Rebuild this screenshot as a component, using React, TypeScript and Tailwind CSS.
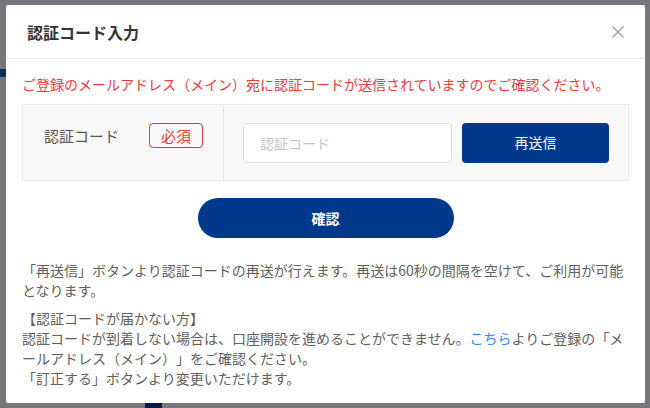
import React from 'react';

const font = '"Noto Sans CJK JP", "Noto Sans", sans-serif';

const CloseIcon = () => (
  <svg width="14" height="14" viewBox="0 0 14 14" fill="none">
    <path d="M1.5 1.5L12.5 12.5M12.5 1.5L1.5 12.5" stroke="#9a9aa0" strokeWidth="1.2" />
  </svg>
);

const App = () => {
  return (
    <div
      className="relative w-[650px] h-[408px] overflow-hidden bg-[#77777b] [text-spacing-trim:space-all]"
      style={{ fontFamily: font }}
    >
      {/* page behind the overlay */}
      <div className="absolute left-0 top-[69px] w-[6px] h-[8px] bg-[#0e2a5e]" />
      <div className="absolute left-[145px] top-[403px] w-[17px] h-[5px] bg-[#0b1c40]" />

      <div className="relative p-[5px] pl-[6px]">
        <div className="bg-white w-[639px] h-[398px] rounded-[2px] flex flex-col">
          {/* Header */}
          <div className="h-[54px] border-b border-[#e8e8ea] flex items-center justify-between pl-[21px] pr-[20px]">
            <h2 className="text-[16px] font-bold text-[#333] leading-none">認証コード入力</h2>
            <button className="w-[14px] h-[14px] flex items-center justify-center">
              <CloseIcon />
            </button>
          </div>

          {/* Body */}
          <div className="px-[16px] pt-[15px]">
            <p className="text-[14px] leading-[20px] text-[#ec3b3b]">
              ご登録のメールアドレス（メイン）宛に認証コードが送信されていますのでご確認ください。
            </p>

            <div className="mt-[10px] flex border border-[#ececef] bg-[#f8f8f9] h-[77px]">
              <div className="w-[201px] border-r border-[#e6e6ea] flex items-start pt-[18px] pl-[21px]">
                <span className="text-[15px] leading-[25px] text-[#555]">認証コード</span>
                <span className="ml-[30px] h-[25px] px-[11px] border border-[#e53935] rounded-[4px] text-[15px] leading-[23px] text-[#e53935]">
                  必須
                </span>
              </div>
              <div className="flex-1 flex items-center pl-[19px] pr-[19px] gap-[10px]">
                <input
                  className="w-[209px] h-[40px] bg-white border border-[#dcdfe6] rounded-[4px] px-[16px] text-[14px] text-[#333] placeholder:text-[#c0c4cc] outline-none"
                  placeholder="認証コード"
                  style={{ fontFamily: font }}
                />
                <button className="w-[147px] h-[40px] bg-[#00388c] rounded-[4px] text-white text-[14px]">
                  再送信
                </button>
              </div>
            </div>

            <div className="flex justify-center mt-[17px]">
              <button className="w-[256px] h-[40px] rounded-full bg-[#00388c] text-white text-[14px] font-bold">
                確認
              </button>
            </div>

            <div className="mt-[22px] text-[14px] leading-[20px] text-[#606060]">
              <p>「再送信」ボタンより認証コードの再送が行えます。再送は60秒の間隔を空けて、ご利用が可能となります。</p>
              <p className="mt-[8px]">
                【認証コードが届かない方】
                <br />
                認証コードが到着しない場合は、口座開設を進めることができません。<span className="text-[#2d8cf0]">こちら</span>よりご登録の「メールアドレス（メイン）」をご確認ください。
                <br />
                「訂正する」ボタンより変更いただけます。
              </p>
            </div>
          </div>
        </div>
      </div>
    </div>
  );
};

export default App;
